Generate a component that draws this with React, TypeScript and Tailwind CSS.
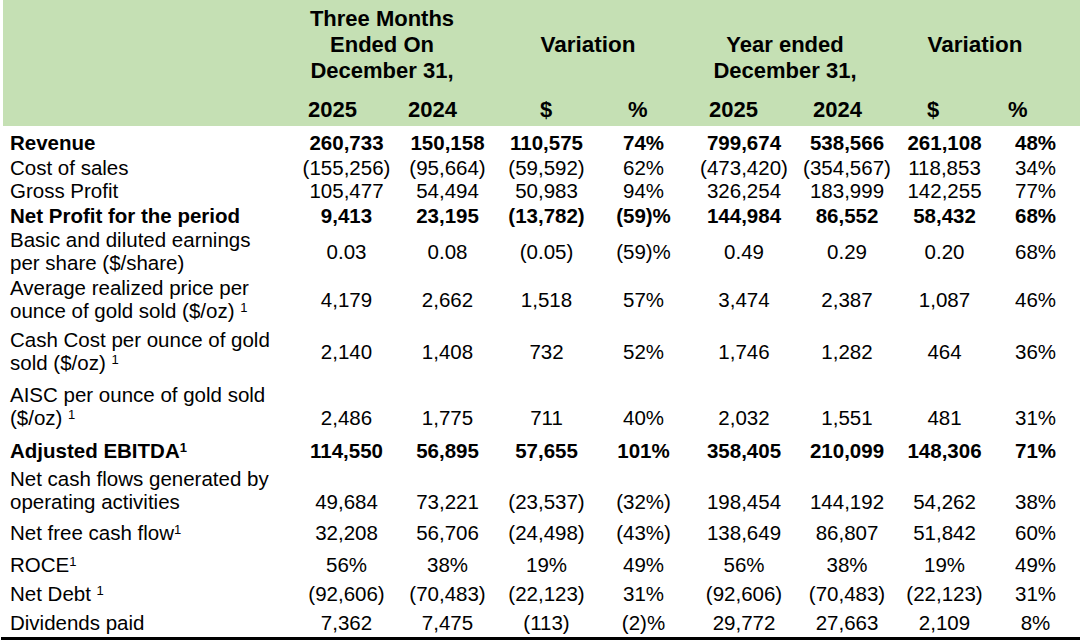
import React from 'react';

type Row = {
  label: React.ReactNode;
  values: string[];
  bold?: boolean;
  gap: string;
  lines: 1 | 2;
  valign?: 'middle' | 'bottom';
};

const Sup = ({ space }: { space?: boolean }) => (
  <>
    {space ? ' ' : ''}
    <sup className="text-[13px]">1</sup>
  </>
);

const rows: Row[] = [
  { label: 'Revenue', values: ['260,733', '150,158', '110,575', '74%', '799,674', '538,566', '261,108', '48%'], bold: true, gap: 'mt-[6px]', lines: 1 },
  { label: 'Cost of sales', values: ['(155,256)', '(95,664)', '(59,592)', '62%', '(473,420)', '(354,567)', '118,853', '34%'], gap: 'mt-[2px]', lines: 1 },
  { label: 'Gross Profit', values: ['105,477', '54,494', '50,983', '94%', '326,254', '183,999', '142,255', '77%'], gap: 'mt-0', lines: 1 },
  { label: 'Net Profit for the period', values: ['9,413', '23,195', '(13,782)', '(59)%', '144,984', '86,552', '58,432', '68%'], bold: true, gap: 'mt-[2px]', lines: 1 },
  {
    label: (
      <>
        Basic and diluted earnings
        <br />
        per share ($/share)
      </>
    ),
    values: ['0.03', '0.08', '(0.05)', '(59)%', '0.49', '0.29', '0.20', '68%'],
    gap: 'mt-[1px]',
    lines: 2,
  },
  {
    label: (
      <>
        Average realized price per
        <br />
        ounce of gold sold ($/oz)
        <Sup space />
      </>
    ),
    values: ['4,179', '2,662', '1,518', '57%', '3,474', '2,387', '1,087', '46%'],
    gap: 'mt-[2px]',
    lines: 2,
  },
  {
    label: (
      <>
        Cash Cost per ounce of gold
        <br />
        sold ($/oz)
        <Sup space />
      </>
    ),
    values: ['2,140', '1,408', '732', '52%', '1,746', '1,282', '464', '36%'],
    gap: 'mt-[6px]',
    lines: 2,
  },
  {
    label: (
      <>
        AISC per ounce of gold sold
        <br />
        ($/oz)
        <Sup space />
      </>
    ),
    values: ['2,486', '1,775', '711', '40%', '2,032', '1,551', '481', '31%'],
    gap: 'mt-[9px]',
    lines: 2,
    valign: 'bottom',
  },
  {
    label: (
      <>
        Adjusted EBITDA
        <Sup />
      </>
    ),
    values: ['114,550', '56,895', '57,655', '101%', '358,405', '210,099', '148,306', '71%'],
    bold: true,
    gap: 'mt-[10px]',
    lines: 1,
  },
  {
    label: (
      <>
        Net cash flows generated by
        <br />
        operating activities
      </>
    ),
    values: ['49,684', '73,221', '(23,537)', '(32%)', '198,454', '144,192', '54,262', '38%'],
    gap: 'mt-[5px]',
    lines: 2,
    valign: 'bottom',
  },
  {
    label: (
      <>
        Net free cash flow
        <Sup />
      </>
    ),
    values: ['32,208', '56,706', '(24,498)', '(43%)', '138,649', '86,807', '51,842', '60%'],
    gap: 'mt-[8px]',
    lines: 1,
  },
  {
    label: (
      <>
        ROCE
        <Sup />
      </>
    ),
    values: ['56%', '38%', '19%', '49%', '56%', '38%', '19%', '49%'],
    gap: 'mt-[9px]',
    lines: 1,
  },
  {
    label: (
      <>
        Net Debt
        <Sup space />
      </>
    ),
    values: ['(92,606)', '(70,483)', '(22,123)', '31%', '(92,606)', '(70,483)', '(22,123)', '31%'],
    gap: 'mt-[6px]',
    lines: 1,
  },
  { label: 'Dividends paid', values: ['7,362', '7,475', '(113)', '(2)%', '29,772', '27,663', '2,109', '8%'], gap: 'mt-[6px]', lines: 1 },
];

const yearCells = [
  { text: '2025', cls: 'pl-[12px]' },
  { text: '2024', cls: 'pl-[11px]' },
  { text: '$', cls: 'pl-[42px]' },
  { text: '%', cls: 'pl-[33px]' },
  { text: '2025', cls: 'pl-[17px]' },
  { text: '2024', cls: 'pl-[17px]' },
  { text: '$', cls: 'pl-[29px]' },
  { text: '%', cls: 'pl-[17px]' },
];

export default function App() {
  return (
    <div className="h-[644px] w-[1080px] overflow-hidden bg-white font-['Liberation_Sans',Arial,sans-serif] text-black">
      {/* Header */}
      <div className="ml-[3px] h-[126px] bg-[#c5e0b4] pt-[6px] text-[22px] font-bold leading-[26px]">
        <div className="grid grid-cols-[293px_101px_101px_97px_97px_104px_102px_93px_89px]">
          <div />
          <div className="col-span-2 pr-[30px] text-center">
            Three Months
            <br />
            Ended On
            <br />
            December 31,
          </div>
          <div className="col-span-2 pr-[14px] pt-[26px] text-center text-[22.5px]">Variation</div>
          <div className="col-span-2 pr-[20px] pt-[26px] text-center">
            Year ended
            <br />
            December 31,
          </div>
          <div className="col-span-2 pr-[28px] pt-[26px] text-center text-[22.5px]">Variation</div>
        </div>
        <div className="mt-[13px] grid grid-cols-[293px_101px_101px_97px_97px_104px_102px_93px_89px]">
          <div />
          {yearCells.map((c, i) => (
            <div key={i} className={c.cls}>
              {c.text}
            </div>
          ))}
        </div>
      </div>

      {/* Body */}
      <div className="-mt-px text-[20.5px] leading-[23px]">
        {rows.map((row, i) => (
          <div
            key={i}
            className={`grid grid-cols-[296px_101px_101px_97px_97px_104px_102px_93px_89px] ${row.gap} ${
              row.bold ? 'font-bold' : ''
            } ${row.lines === 2 ? 'h-[46px]' : 'h-[23px]'}`}
          >
            <div className="whitespace-nowrap pl-[10px]">{row.label}</div>
            {row.values.map((v, j) => (
              <div
                key={j}
                className={`flex justify-center whitespace-nowrap ${
                  row.valign === 'bottom' ? 'items-end' : 'items-center'
                }`}
              >
                {v}
              </div>
            ))}
          </div>
        ))}
        <div className="mt-[3px] ml-px h-[3px] bg-black" />
      </div>
    </div>
  );
}
